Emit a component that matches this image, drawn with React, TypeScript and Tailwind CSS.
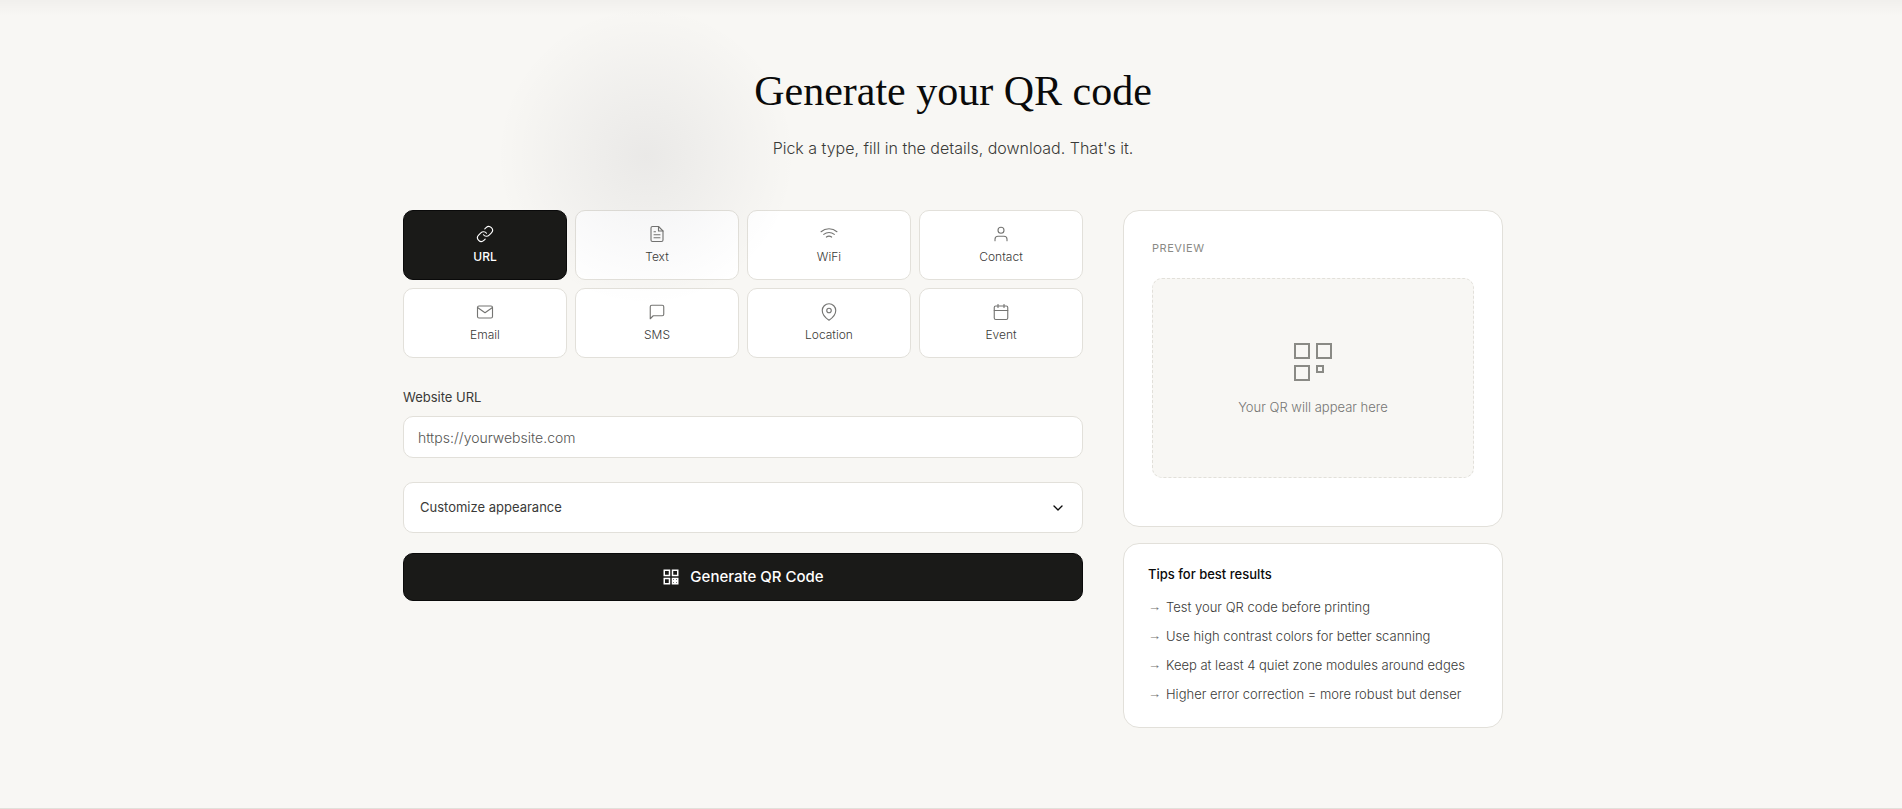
import { useState } from 'react';
import {
  FiLink,
  FiFileText,
  FiUser,
  FiMail,
  FiMessageSquare,
  FiMapPin,
  FiCalendar,
  FiChevronDown,
} from 'react-icons/fi';

const iconProps = { size: 18, strokeWidth: 1.5 };

const WifiIcon = () => (
  <svg width="18" height="18" viewBox="0 0 24 24" fill="none" stroke="currentColor" strokeWidth="1.5" strokeLinecap="round" strokeLinejoin="round">
    <path d="M5 12.55a11 11 0 0 1 14.08 0M1.42 9a16 16 0 0 1 21.16 0M8.53 16.11a6 6 0 0 1 6.95 0" />
  </svg>
);

const types = [
  { id: 'url', label: 'URL', icon: <FiLink {...iconProps} /> },
  { id: 'text', label: 'Text', icon: <FiFileText {...iconProps} /> },
  { id: 'wifi', label: 'WiFi', icon: <WifiIcon /> },
  { id: 'contact', label: 'Contact', icon: <FiUser {...iconProps} /> },
  { id: 'email', label: 'Email', icon: <FiMail {...iconProps} /> },
  { id: 'sms', label: 'SMS', icon: <FiMessageSquare {...iconProps} /> },
  { id: 'location', label: 'Location', icon: <FiMapPin {...iconProps} /> },
  { id: 'event', label: 'Event', icon: <FiCalendar {...iconProps} /> },
];

const tips = [
  'Test your QR code before printing',
  'Use high contrast colors for better scanning',
  'Keep at least 4 quiet zone modules around edges',
  'Higher error correction = more robust but denser',
];

const App: React.FC = () => {
  const [active, setActive] = useState('url');
  const [url, setUrl] = useState('');

  return (
    <div className="relative min-h-screen overflow-hidden bg-[#f8f7f4] font-['Inter',sans-serif] text-[#0a0a0a]">
      {/* Shadow under the top bar */}
      <div className="pointer-events-none absolute inset-x-0 top-0 h-4 bg-linear-to-b from-black/3 to-transparent" />

      <section className="border-b border-[#e2e0da] pt-[66px] pr-6 pb-20 pl-7">
        <header className="mb-[46px] text-center">
          <h2 className="mb-4 font-['Liberation_Serif',serif] text-[42px] leading-[50px]">Generate your QR code</h2>
          <p className="text-base leading-8 font-light text-[#3a3a38]">
            Pick a type, fill in the details, download. That's it.
          </p>
        </header>

        <div className="mx-auto grid max-w-[1100px] items-start gap-10 lg:grid-cols-[1fr_380px]">
          <div>
            <div className="mb-7 grid grid-cols-4 gap-2">
              {types.map((t) => (
                <button
                  key={t.id}
                  type="button"
                  onClick={() => setActive(t.id)}
                  className={`flex h-[70px] flex-col items-center justify-center gap-[6px] rounded-[10px] border text-xs ${
                    active === t.id
                      ? 'border-[#0a0a0a] bg-[#1a1a18] font-medium text-white'
                      : 'border-[#e2e0da] bg-white font-light text-[#3a3a38]'
                  }`}
                >
                  <span className={active === t.id ? 'text-white' : 'text-[#757573]'}>{t.icon}</span>
                  {t.label}
                </button>
              ))}
            </div>

            <label htmlFor="url" className="mb-2 block text-[13px] leading-[22px] text-[#3a3a38]">
              Website URL
            </label>
            <input
              id="url"
              type="url"
              value={url}
              onChange={(e) => setUrl(e.target.value)}
              placeholder="https://yourwebsite.com"
              className="mb-6 block h-[42px] w-full rounded-[10px] border border-[#e2e0da] bg-white px-[14px] text-sm font-light outline-none placeholder:text-[#555553]"
            />

            <button
              type="button"
              className="mb-5 flex h-[51px] w-full items-center justify-between rounded-[10px] border border-[#e2e0da] bg-white px-4 text-[13px] text-[#3a3a38]"
            >
              Customize appearance
              <FiChevronDown size={16} className="text-[#0a0a0a]" />
            </button>

            <button
              type="button"
              className="flex h-12 w-full items-center justify-center gap-[10px] rounded-[10px] border border-[#0a0a0a] bg-[#1a1a18] text-[15px] font-medium text-white"
            >
              <svg width="18" height="18" viewBox="0 0 24 24" fill="none" stroke="currentColor" strokeWidth="2">
                <path d="M3 3h7v7H3zM14 3h7v7h-7zM3 14h7v7H3z" />
                <path d="M14 14h3v3h-3zM18 14h3v3h-3zM14 18h3v3h-3zM18 18h3v3h-3z" />
              </svg>
              Generate QR Code
            </button>
          </div>

          <aside className="flex flex-col gap-4">
            <div className="rounded-2xl border border-[#e2e0da] bg-white px-7 pt-7 pb-12">
              <h3 className="mb-5 text-[11px] leading-[19px] tracking-wider text-[#8a8a85] uppercase">Preview</h3>
              <div className="flex h-[200px] flex-col items-center justify-center gap-[10px] rounded-[10px] border border-dashed border-[#e2e0da] bg-[#f8f7f4] text-[#8a8a85]">
                <svg width="48" height="48" viewBox="0 0 48 48" fill="none" stroke="currentColor" strokeWidth="2">
                  <path d="M6 6h14v14H6zM28 6h14v14H28zM6 28h14v14H6zM28 28h6v6h-6z" />
                </svg>
                <p className="text-[13px] leading-[22px] font-light text-[#757573]">Your QR will appear here</p>
              </div>
            </div>

            <div className="rounded-2xl border border-[#e2e0da] bg-white px-6 pt-5 pb-[22px]">
              <h3 className="mb-3 text-[13px] leading-5 font-medium">Tips for best results</h3>
              <ul className="flex flex-col gap-[7px]">
                {tips.map((tip) => (
                  <li key={tip} className="flex gap-[5px] text-[13px] leading-[22px] font-light text-[#3a3a38]">
                    <span className="font-['Liberation_Serif',serif] text-[#757573]">→</span>
                    {tip}
                  </li>
                ))}
              </ul>
            </div>
          </aside>
        </div>
      </section>

      {/* Cursor glow */}
      <div className="pointer-events-none absolute top-[-44px] left-[446px] size-[400px] rounded-full bg-[radial-gradient(circle_closest-side,rgba(10,10,30,0.06)_0%,transparent_75%)]" />
    </div>
  );
};

export default App;
